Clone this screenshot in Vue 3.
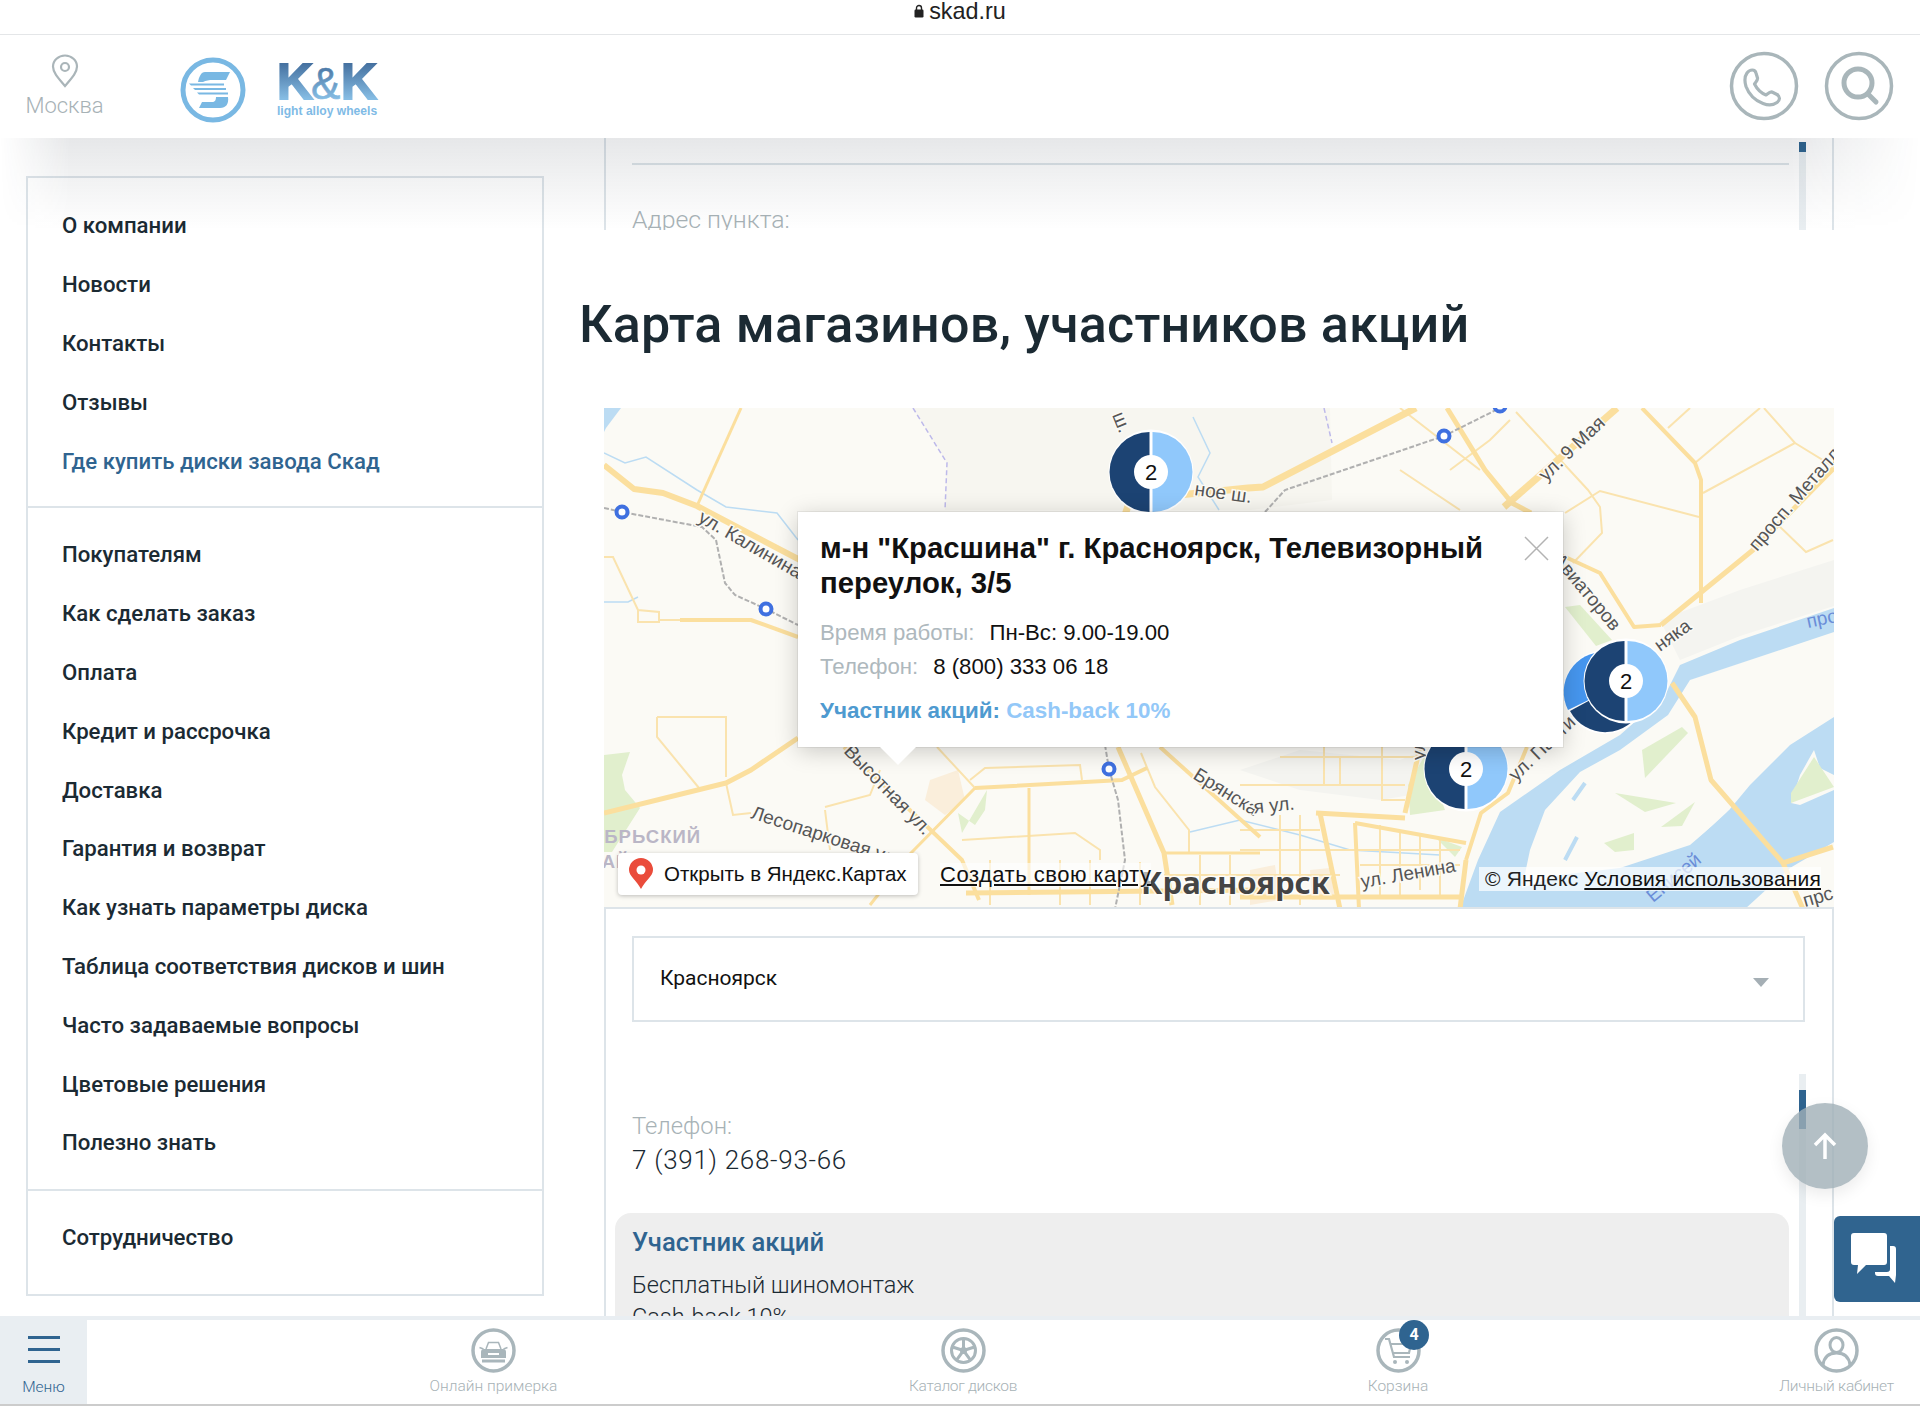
<template>
  <div class="page">
    <div class="status">
      <svg class="lock" width="10" height="14" viewBox="0 0 10 14"><path d="M2.5 6V4a2.5 2.5 0 0 1 5 0v2" fill="none" stroke="#222" stroke-width="1.4"/><rect x="0.5" y="5.5" width="9" height="8" rx="1.2" fill="#222"/></svg>
      <span>skad.ru</span>
    </div>

    <header class="head">
      <div class="city">
        <svg width="28" height="34" viewBox="0 0 28 34"><path d="M14 32C8 25 2 19 2 12.5a12 11 0 0 1 24 0C26 19 20 25 14 32Z" fill="none" stroke="#aab5b9" stroke-width="2.2"/><circle cx="14" cy="13" r="4" fill="none" stroke="#aab5b9" stroke-width="2.2"/></svg>
        <span>Москва</span>
      </div>
      <svg class="s-logo" width="66" height="66" viewBox="180 57 66 66">
        <circle cx="213" cy="90" r="30" fill="none" stroke="#79b8e3" stroke-width="5"/>
        <path d="M205 72h25l-4 8h-13c-4 0-7 .5-10 2h-5c1-5 3-10 7-10Z" fill="#79b8e3"/>
        <path d="M189 83.500h35v2h-33ZM193 88h33v2h-31ZM197 92.500h31v2h-29Z" fill="#79b8e3"/>
        <path d="M216 97h12c1 7-2 11-8 11h-21l3-6h10c3 0 4-2 4-5Z" fill="#79b8e3"/>
      </svg>
      <div class="kk">
        <svg class="kk-mark" width="104" height="40" viewBox="276 62 104 40">
          <defs>
            <linearGradient id="kkGrad" x1="0" y1="63" x2="0" y2="99" gradientUnits="userSpaceOnUse">
              <stop offset="0" stop-color="#45709f"/>
              <stop offset="1" stop-color="#86bde4"/>
            </linearGradient>
          </defs>
          <text x="276" y="99" class="kk-big">K</text>
          <text x="310" y="99" class="kk-amp">&amp;</text>
          <text x="340" y="99" class="kk-big">K</text>
        </svg>
        <div class="kk-sub">light alloy wheels</div>
      </div>
      <div class="head-btns">
        <button class="round-btn">
          <svg width="70" height="70" viewBox="0 0 70 70"><circle cx="35" cy="35" r="32.500" fill="none" stroke="#a9b6ba" stroke-width="3.500"/><path d="M18 22c3-4 8-4 9 0l1.500 5c.5 2-1.500 4-3 6 2.500 5 6.500 9 11.500 11 2-1.500 4-3.500 6-3l5 2.500c3.500 2 3 6 0 8-4 3-9 3-14 1-8-3-14-9-17-17-1.500-5-1.500-10 1-13.500Z" fill="none" stroke="#a9b6ba" stroke-width="3.200" stroke-linejoin="round"/></svg>
        </button>
        <button class="round-btn">
          <svg width="70" height="70" viewBox="0 0 70 70"><circle cx="35" cy="35" r="32.500" fill="none" stroke="#a9b6ba" stroke-width="3.500"/><circle cx="34" cy="32" r="14" fill="none" stroke="#a9b6ba" stroke-width="5"/><path d="M44 43l8 8" stroke="#a9b6ba" stroke-width="5" stroke-linecap="round"/></svg>
        </button>
      </div>
    </header>

    <div class="body">
      <aside class="side">
        <div v-for="(group, i) in menu" :key="i" class="side-group">
          <a v-for="item in group" :key="item" class="side-item" :class="{ on: item === activeItem }">{{ item }}</a>
        </div>
      </aside>

      <main class="main">
        <section class="card-top">
          <div class="card-line"></div>
          <div class="addr">Адрес пункта:</div>
          <div class="scroll scroll-a"><i></i></div>
        </section>

        <h1 class="title">Карта магазинов, участников акций</h1>

        <div class="map">
          <svg class="map-svg" width="1230" height="499" viewBox="604 408 1230 499">
            <rect x="604" y="408" width="1230" height="499" fill="#fbfaf5"/>
            <path d="M913 408L1330 408 1332 500 1250 510 945 510 947 463Z" fill="#f7f6f0"/>
            <path d="M604 408h17l-15 20-2 4Z" fill="#bcdcf3"/>
            <!-- hill shading -->
            <g fill="#f4f4f0">
              <path d="M1660 620L1740 590 1834 560V606L1740 636 1680 660Z"/>
              <path d="M1240 770L1300 750 1400 760 1450 740 1440 790 1380 800 1300 790Z"/>
            </g>
            <!-- water -->
            <path d="M1834 608L1740 640 1680 665 1665 695 1620 735 1560 770 1500 812 1478 860 1460 909H1834Z" fill="#bcdcf3"/>
            <path d="M1834 632L1750 660 1690 680 1668 715 1620 750 1580 772 1545 810 1530 850 1522 888 1560 875 1620 868 1690 845 1725 815 1750 785 1790 745 1834 717Z" fill="#fbfaf5"/>
            <path d="M1745 909L1790 868 1834 842V909Z" fill="#fbfaf5"/>
            <path d="M1791 803L1800 775 1814 750 1820 768 1834 775V790L1800 805Z" fill="#fbfaf5"/>
            <path d="M1573 800L1585 783M1565 860L1577 837M1700 840L1730 812" stroke="#bcdcf3" stroke-width="4" fill="none"/>
            <!-- greens -->
            <g fill="#e1efcd">
              <path d="M1565 607L1580 605 1612 640 1596 646Z"/>
              <path d="M1642 750L1682 727 1688 733 1645 778Z"/>
              <path d="M1615 793L1676 803 1645 812Z"/>
              <path d="M1661 827L1695 802 1682 826Z"/>
              <path d="M1604 843L1634 833 1634 850 1615 852Z"/>
              <path d="M1791 793L1814 757 1834 787 1791 803Z"/>
              <path d="M604 755L630 752 622 775 625 790 640 808 612 852H604Z"/>
              <path d="M962 833L987 790 985 810 975 825 958 813Z"/>
              <path d="M1408 785L1425 755 1445 810 1410 815Z"/>
              <path d="M1435 837L1462 847 1455 857Z"/>
            </g>
            <path d="M930 780L958 770 965 800 945 815 925 800Z" fill="#faeedb"/>
            <path d="M1250 870L1275 865 1280 900 1250 905ZM1310 870L1330 868 1335 900H1312Z" fill="#faeedb"/>
            <!-- thin rivers and district line -->
            <g fill="none" stroke="#bcdcf3" stroke-width="1.500">
              <path d="M604 453L625 463 646 457 697 490 726 507 777 513 798 540"/>
              <path d="M604 602L628 602 638 597"/>
              <path d="M1193 417L1210 453 1198 477 1219 510"/>
              <path d="M1190 832L1240 820 1300 835 1350 850 1440 855"/>
            </g>
            <path d="M913 408L947 463 945 510M1324 408L1332 443" fill="none" stroke="#bdb9ea" stroke-width="1.500" stroke-dasharray="5 3"/>
            <!-- small roads -->
            <g fill="none" stroke="#fae3ae" stroke-width="2">
              <path d="M604 557H613L638 610 659 612V622H638V610M659 620H680"/>
              <path d="M657 717H726V777M657 717V737L699 788"/>
              <path d="M726 783L733 815 751 813"/>
              <path d="M825 807L870 795 880 770M830 850L825 810"/>
              <path d="M975 788L937 747M970 780L985 768 1080 765 1082 780"/>
              <path d="M962 840L1075 833 1100 850V860"/>
              <path d="M1141 753L1155 787 1189 830V853"/>
              <path d="M1240 785H1405M1280 757H1440M1324 747V785M1340 757V785M1382 747V800H1405"/>
              <path d="M1516 412L1588 490 1600 507 1602 533 1573 563M1565 513L1600 491 1699 517"/>
              <path d="M1695 463L1760 408M1668 428L1690 408"/>
              <path d="M1703 493L1795 443 1764 408M1795 443L1834 467"/>
              <path d="M1776 523L1806 552 1833 540"/>
              <path d="M1400 408L1480 470M1450 470L1490 440 1510 420M1460 510L1400 470"/>
              <path d="M1240 850H1460M1240 875H1340M1280 815V900M1240 830H1320M1300 815V905M1380 825V895M1400 830V895M1420 835V890M1440 838V895M1360 865H1460"/>
              <path d="M990 860V905M1060 860V905M1090 860V905M1140 862V905M1200 855V905M1230 855V905M1164 875H1260"/>
            </g>
            <!-- main roads -->
            <g fill="none" stroke="#fbdf9e" stroke-linejoin="round">
              <path stroke-width="6" d="M604 465L634 489 663 493 697 506 800 560"/>
              <path stroke-width="3" d="M741 408L697 506"/>
              <path stroke-width="4" d="M680 620H751L798 637"/>
              <path stroke-width="5" d="M604 813L726 783 751 770 798 738"/>
              <path stroke-width="4" d="M844 747L962 860 979 900"/>
              <path stroke-width="4" d="M975 788L1122 780 1147 768"/>
              <path stroke-width="3" d="M975 788L911 853 870 905"/>
              <path stroke-width="3" d="M1029 788V895"/>
              <path stroke-width="5" d="M1118 747L1164 853 1172 905"/>
              <path stroke-width="4" d="M1160 747L1260 837"/>
              <path stroke-width="5" d="M966 893L1260 890"/>
              <path stroke-width="3" d="M1164 853H1260"/>
              <path stroke-width="7" d="M1120 530L1130 500 1248 488 1263 487 1416 408"/>
              <path stroke-width="5" d="M1447 408L1485 470 1512 503 1531 513"/>
              <path stroke-width="7" d="M1504 507L1617 408"/>
              <path stroke-width="4" d="M1642 408L1695 463 1701 480V603"/>
              <path stroke-width="5" d="M1661 625L1753 550 1834 468"/>
              <path stroke-width="4" d="M1561 555L1600 573 1634 627 1661 625"/>
              <path stroke-width="5" d="M1672 683L1695 717 1711 780 1783 863 1833 847M1783 863L1803 909"/>
              <path stroke-width="5" d="M1405 813L1420 747"/>
              <path stroke-width="5" d="M1316 813L1405 818"/>
              <path stroke-width="4" d="M1466 860L1481 813 1508 793 1527 747"/>
              <path stroke-width="5" d="M1320 813L1340 909"/>
              <path stroke-width="4" d="M1355 823L1359 909M1355 823L1466 843"/>
              <path stroke-width="5" d="M1240 897H1462M1466 860L1460 909"/>
            </g>
            <!-- railways and stops -->
            <g fill="none" stroke="#b0b0b0" stroke-width="2" stroke-dasharray="5 2">
              <path d="M604 508L622 512 702 527 716 540 725 583 735 595 766 609 798 625"/>
              <path d="M1265 512L1285 490 1444 436 1500 408"/>
              <path d="M1109 769L1118 800 1125 860 1115 909M1105 745L1109 769"/>
            </g>
            <g fill="#fff" stroke="#3f70e0" stroke-width="4">
              <circle cx="622" cy="512" r="5.500"/>
              <circle cx="766" cy="609" r="5.500"/>
              <circle cx="1109" cy="769" r="5.500"/>
              <circle cx="1444" cy="436" r="5.500"/>
              <circle cx="1500" cy="406" r="5.500"/>
            </g>
            <!-- street labels -->
            <g class="lbl">
              <text transform="translate(1112 415) rotate(68)">ш.</text>
              <text transform="translate(1194 495) rotate(8)">ное ш.</text>
              <text transform="translate(697 521) rotate(30)">ул. Калинина</text>
              <text transform="translate(1546 482) rotate(-44)">ул. 9 Мая</text>
              <text transform="translate(1757 552) rotate(-49)">просп. Металлургов</text>
              <text transform="translate(1552 560) rotate(50)">Авиаторов</text>
              <text transform="translate(1660 652) rotate(-36)">няка</text>
              <text transform="translate(1516 782) rotate(-44)">ул. Партизана</text>
              <text transform="translate(1425 760) rotate(-90)">ул.</text>
              <text transform="translate(843 752) rotate(46)">Высотная ул.</text>
              <text transform="translate(750 818) rotate(18)">Лесопарковая ул.</text>
              <text transform="translate(1362 888) rotate(-10)">ул. Ленина</text>
              <path id="bryansk" d="M1192 778L1250 814 1310 808" fill="none"/>
              <text><textPath href="#bryansk">Брянская ул.</textPath></text>
            </g>
            <text class="district" x="590" y="843">ЯБРЬСКИЙ</text>
            <text class="district" x="590" y="868">РАЙОН</text>
            <text class="water-lbl" transform="translate(1808 628) rotate(-12)">проток</text>
            <text class="water-lbl" transform="translate(1653 903) rotate(-40)">Енисей</text>
            <text class="water-lbl dark" transform="translate(1805 907) rotate(-16)">прс</text>
            <text class="city-lbl" x="1141" y="894">Красноярск</text>
            <!-- clusters -->
            <g>
              <circle cx="1605" cy="692" r="42" fill="#fff"/>
              <path d="M1605 692L1568 710A40 40 0 0 1 1605 652Z" fill="#4696ee"/>
              <path d="M1605 692L1605 652A40 40 0 0 1 1645 692Z" fill="#4696ee"/>
              <path d="M1605 692L1570 711A40 40 0 0 0 1642 708Z" fill="#1c4373"/>
            </g>
            <g v-for="c in clusters" :key="c.x">
              <circle :cx="c.x" :cy="c.y" r="42.500" fill="#fff"/>
              <path :d="`M${c.x - 1.5} ${c.y - 40}A40 40 0 0 0 ${c.x - 1.5} ${c.y + 40}Z`" fill="#1c4373"/>
              <path :d="`M${c.x + 1.5} ${c.y - 40}A40 40 0 0 1 ${c.x + 1.5} ${c.y + 40}Z`" fill="#90c8fb"/>
              <circle :cx="c.x" :cy="c.y" r="17" fill="#fff"/>
              <text class="num" :x="c.x" :y="c.y + 8">2</text>
            </g>
          </svg>

          <div class="balloon">
            <svg class="close" width="25" height="25" viewBox="0 0 25 25"><path d="M1 1l23 23M24 1L1 24" stroke="#b3b3b3" stroke-width="1.500"/></svg>
            <div class="b-title">м-н "Красшина" г. Красноярск, Телевизорный переулок, 3/5</div>
            <div class="b-row"><span class="b-key">Время работы:</span><span>Пн-Вс: 9.00-19.00</span></div>
            <div class="b-row"><span class="b-key">Телефон:</span><span>8 (800) 333 06 18</span></div>
            <div class="b-promo">Участник акций: <em>Cash-back 10%</em></div>
            <i class="b-tail"></i>
          </div>

          <div class="open-btn">
            <svg width="26" height="32" viewBox="0 0 26 32"><path d="M13 31C9 23 1 18 1 12a12 12 0 0 1 24 0c0 6-8 11-12 19Z" fill="#ea4c3b"/><circle cx="13" cy="12" r="4.500" fill="#fff"/></svg>
            <span>Открыть в Яндекс.Картах</span>
          </div>
          <a class="make-map">Создать свою карту</a>
          <div class="copy">© Яндекс <a>Условия использования</a></div>
        </div>

        <section class="card-low">
          <div class="select">
            <span>Красноярск</span>
            <i class="caret"></i>
          </div>
          <div class="lbl-key">Телефон:</div>
          <div class="lbl-val">7 (391) 268-93-66</div>
          <div class="promo">
            <div class="promo-h">Участник акций</div>
            <div class="promo-t">Бесплатный шиномонтаж</div>
            <div class="promo-t">Cash-back 10%</div>
          </div>
          <div class="scroll scroll-b"><i></i></div>
        </section>
      </main>

      <button class="to-top">
        <svg width="26" height="28" viewBox="0 0 26 28"><path d="M13 27V3M3 13L13 3l10 10" fill="none" stroke="#fff" stroke-width="3.500"/></svg>
      </button>
      <button class="chat">
        <svg width="52" height="52" viewBox="0 0 52 52">
          <path d="M39 13h3a3 3 0 0 1 3 3v26l-1 8-6-7H27a3 3 0 0 1-3-3v-1h12a3 3 0 0 0 3-3Z" fill="#fff"/>
          <path d="M3 0h30a3 3 0 0 1 3 3v26a3 3 0 0 1-3 3H15l-9 9 1-9H3a3 3 0 0 1-3-3V3a3 3 0 0 1 3-3Z" fill="#fff"/>
        </svg>
      </button>
    </div>

    <nav class="nav">
      <a class="menu-tile">
        <span class="burger"><i></i><i></i><i></i></span>
        <span>Меню</span>
      </a>
      <div class="nav-items">
        <a class="nav-item w-fit">
          <svg width="45" height="45" viewBox="0 0 45 45"><circle cx="22.500" cy="22.500" r="20.500" fill="none" stroke="#a9b6bb" stroke-width="3.500"/><path d="M15 21l2.500-6.500h10L30 21" fill="none" stroke="#a9b6bb" stroke-width="1.500"/><path d="M13 21h19c2 0 3 1 3 3v6H10v-6c0-2 1-3 3-3Z" fill="#a9b6bb"/><path d="M8.500 19.500l4 1.500M36.500 19.500l-4 1.500" stroke="#a9b6bb" stroke-width="1.500"/><rect x="11" y="31.500" width="23" height="3" fill="#a9b6bb"/><rect x="17" y="25" width="11" height="2" fill="#fff"/></svg>
          <span>Онлайн примерка</span>
        </a>
        <a class="nav-item w-cat">
          <svg width="45" height="45" viewBox="0 0 45 45"><circle cx="22.500" cy="22.500" r="20.500" fill="none" stroke="#a9b6bb" stroke-width="3.500"/><circle cx="22.500" cy="22.500" r="12" fill="none" stroke="#a9b6bb" stroke-width="3"/><path d="M22.500 22.500V11M22.500 22.500L33.500 19M22.500 22.500l6.800 9.300M22.500 22.500l-6.800 9.300M22.500 22.500L11.500 19" stroke="#a9b6bb" stroke-width="3"/><circle cx="22.500" cy="22.500" r="3.500" fill="#a9b6bb"/></svg>
          <span>Каталог дисков</span>
        </a>
        <a class="nav-item w-cart">
          <svg width="45" height="45" viewBox="0 0 45 45"><circle cx="22.500" cy="22.500" r="20.500" fill="none" stroke="#a9b6bb" stroke-width="3.500"/><path d="M9 11h4l5 18h16M15 16h20l-2 9H17" fill="none" stroke="#a9b6bb" stroke-width="2.200"/><circle cx="19" cy="34" r="2" fill="#a9b6bb"/><circle cx="31" cy="34" r="2" fill="#a9b6bb"/></svg>
          <span>Корзина</span>
          <b class="badge">4</b>
        </a>
        <a class="nav-item w-lk">
          <svg width="45" height="45" viewBox="0 0 45 45"><circle cx="22.500" cy="22.500" r="20.500" fill="none" stroke="#a9b6bb" stroke-width="3.500"/><ellipse cx="22.500" cy="17" rx="6.500" ry="7.500" fill="none" stroke="#a9b6bb" stroke-width="3"/><path d="M9 37c1-8 6-12 13.500-12S35 29 36 37" fill="none" stroke="#a9b6bb" stroke-width="3"/></svg>
          <span>Личный кабинет</span>
        </a>
      </div>
    </nav>
  </div>
</template>

<script setup>
const activeItem = 'Где купить диски завода Скад'

const menu = [
  ['О компании', 'Новости', 'Контакты', 'Отзывы', activeItem],
  [
    'Покупателям',
    'Как сделать заказ',
    'Оплата',
    'Кредит и рассрочка',
    'Доставка',
    'Гарантия и возврат',
    'Как узнать параметры диска',
    'Таблица соответствия дисков и шин',
    'Часто задаваемые вопросы',
    'Цветовые решения',
    'Полезно знать',
  ],
  ['Сотрудничество'],
]

const clusters = [
  { x: 1151, y: 472 },
  { x: 1626, y: 681 },
  { x: 1466, y: 769 },
]
</script>

<style>
html, body { margin: 0; background: #fff; }
</style>

<style scoped>
.page { position: relative; width: 1920px; height: 1406px; overflow: hidden; display: flex; flex-direction: column; background: #fff; font-family: Roboto, "Noto Sans", sans-serif; color: #1b2a33; }

.status { height: 34px; border-bottom: 1px solid #e4e6e8; display: flex; justify-content: center; align-items: flex-start; gap: 5px; font: 23.400px/22px "Liberation Sans", sans-serif; color: #222; }
.lock { margin-top: 4px; }

.head { height: 103px; display: flex; align-items: flex-start; position: relative; z-index: 3; background: #fff; }
.city { width: 75px; margin: 19px 0 0 27px; display: flex; flex-direction: column; align-items: center; gap: 6px; font-size: 22px; font-weight: 300; color: #a7b2b6; line-height: 24px; }
.s-logo { margin: 22px 0 0 78px; }
.kk { margin: 27px 0 0 31px; width: 104px; }
.kk-mark { display: block; }
.kk-big { font: 700 50px "Liberation Sans", sans-serif; fill: url(#kkGrad); stroke: url(#kkGrad); stroke-width: 1.800px; }
.kk-amp { font: 400 44px "Liberation Sans", sans-serif; fill: url(#kkGrad); stroke: url(#kkGrad); stroke-width: .6px; }
.kk-sub { font: 700 12.100px/14px "Liberation Sans", sans-serif; color: #7fbbe6; margin-top: 2px; white-space: nowrap; }
.head-btns { margin: 16px 26px 0 auto; display: flex; gap: 25px; }
.round-btn { width: 70px; height: 70px; padding: 0; border: 0; background: none; display: block; }

.body { position: relative; flex: 1; min-height: 0; display: flex; align-items: flex-start; }
.body::before { content: ""; position: absolute; z-index: 2; top: 0; left: 0; right: 0; height: 92px; pointer-events: none; background: linear-gradient(rgba(30, 40, 55, .11), rgba(30, 40, 55, 0)); -webkit-mask-image: linear-gradient(90deg, transparent, #000 70px, #000 calc(100% - 130px), transparent); mask-image: linear-gradient(90deg, transparent, #000 70px, #000 calc(100% - 130px), transparent); }

.side { width: 518px; margin: 38px 0 0 26px; box-sizing: border-box; border: 2px solid #dde4e9; padding-bottom: 10px; flex: none; }
.side-group { padding: 17px 0; border-bottom: 2px solid #dde4e9; }
.side-group:first-child { padding: 18px 0 16px; }
.side-group:last-child { border-bottom: 0; }
.side-item { display: flex; align-items: center; height: 58.800px; padding-left: 34px; font-size: 22.200px; font-weight: 500; color: #1b2a33; }
.side-item.on { color: #2f6490; }

.main { margin-left: 35px; flex: 1; min-width: 0; }
.card-top { position: relative; height: 92px; width: 1230px; margin-left: 25px; box-sizing: border-box; border: solid #dde4e9; border-width: 0 2px; padding: 25px 0 0 26px; overflow: hidden; }
.card-line { height: 2px; width: 1157px; background: #dde4e9; }
.addr { margin-top: 40px; font-size: 24.800px; font-weight: 300; line-height: 30px; color: #a7b2b6; }
.scroll { position: absolute; left: 1193px; width: 7px; background: #e9eef1; }
.scroll i { display: block; width: 100%; background: #2f6490; }
.scroll-a { top: 4px; bottom: 0; }
.scroll-a i { height: 10px; }
.scroll-b { top: 165px; bottom: 0; }
.scroll-b i { height: 39px; margin-top: 16px; }

.title { margin: 65px 0 53px; font-size: 52px; line-height: 60px; font-weight: 500; letter-spacing: .2px; color: #1b2a33; white-space: nowrap; }

.map { position: relative; width: 1230px; height: 499px; margin-left: 25px; overflow: hidden; }
.map-svg { position: absolute; inset: 0; display: block; }
.lbl text { font: 19px "Liberation Sans", sans-serif; fill: #555; paint-order: stroke; stroke: #fbfaf5; stroke-width: 3px; }
.district { font: 700 18.500px "Liberation Sans", sans-serif; fill: #bab6c6; letter-spacing: 1px; }
.water-lbl { font: 19px "Liberation Sans", sans-serif; fill: #6a8dd8; }
.water-lbl.dark { fill: #555; }
.city-lbl { font: 700 31px "Noto Sans", sans-serif; fill: #444; paint-order: stroke; stroke: rgba(255,255,255,.7); stroke-width: 3px; }
.num { font: 22px "Liberation Sans", sans-serif; text-anchor: middle; fill: #111; }

.balloon { position: absolute; left: 194px; top: 104px; width: 765px; height: 235px; box-sizing: border-box; padding: 18px 60px 0 22px; background: #fff; box-shadow: 0 0 0 1px rgba(0,0,0,.06), 0 4px 22px rgba(0,0,0,.2); font-family: "Liberation Sans", sans-serif; color: #111; }
.b-title { font-size: 29.300px; line-height: 35px; font-weight: 700; margin-bottom: 16px; }
.b-row { font-size: 22.200px; line-height: 34px; display: flex; gap: 15px; }
.b-key { color: #aeb8bd; }
.b-promo { margin-top: 10px; font-size: 22.400px; line-height: 34px; font-weight: 700; color: #4e9ad0; }
.b-promo em { font-style: normal; color: #93c8f8; }
.close { position: absolute; right: 14px; top: 24px; }
.b-tail { position: absolute; left: 82px; bottom: -18px; width: 0; height: 0; border: solid transparent; border-width: 18px 18px 0; border-top-color: #fff; }

.open-btn { position: absolute; left: 14px; top: 445px; width: 300px; height: 42px; box-sizing: border-box; padding-left: 10px; display: flex; align-items: center; gap: 10px; background: #fff; border-radius: 4px; box-shadow: 0 1px 4px rgba(0,0,0,.25); font: 20.500px "Liberation Sans", sans-serif; color: #111; white-space: nowrap; }
.make-map { position: absolute; left: 336px; top: 455px; font: 22px/24px "Liberation Sans", sans-serif; color: #111; text-decoration: underline; background: rgba(255,255,255,.6); letter-spacing: .5px; }
.copy { position: absolute; right: 13px; top: 459px; padding-left: 6px; font: 21px/24px "Liberation Sans", sans-serif; color: #222; background: rgba(255,255,255,.7); letter-spacing: .17px; }
.copy a { text-decoration: underline; color: #111; }

.card-low { position: relative; width: 1230px; height: 409px; margin-left: 25px; box-sizing: border-box; border: solid #dde4e9; border-width: 2px 2px 0; padding: 27px 27px 0 26px; overflow: hidden; }
.select { height: 86px; box-sizing: border-box; border: 2px solid #dde4e9; padding: 0 26px 3px; display: flex; align-items: center; justify-content: space-between; font-size: 21px; color: #111; }
.caret { width: 0; height: 0; margin: 10px 8px 0 0; border: solid transparent; border-width: 9px 8.500px 0; border-top-color: #a5afb5; }
.lbl-key { margin-top: 89px; font-size: 23.800px; font-weight: 300; line-height: 30px; color: #a7b2b6; }
.lbl-val { margin-top: 1px; font-size: 26px; font-weight: 300; line-height: 36px; color: #1b2a33; letter-spacing: .7px; }
.promo { margin: 35px -10px 0 -17px; height: 140px; padding: 14px 0 0 17px; background: #eee; border-radius: 16px 16px 0 0; width: 1174px; box-sizing: border-box; }
.promo-h { font-size: 25.600px; line-height: 30px; font-weight: 500; color: #2f6490; margin-bottom: 12px; }
.promo-t { font-size: 23.500px; font-weight: 300; line-height: 32px; color: #1b2a33; }

.to-top { position: absolute; z-index: 4; left: 1782px; top: 965px; width: 86px; height: 86px; padding: 0; border: 0; border-radius: 50%; background: rgba(160, 175, 182, .8); box-shadow: 0 6px 16px rgba(0,0,0,.08); display: flex; align-items: center; justify-content: center; }
.chat { position: absolute; z-index: 4; right: 0; top: 1078px; width: 86px; height: 86px; padding: 0; border: 0; border-radius: 6px 0 0 6px; background: #30648f; display: flex; align-items: center; justify-content: center; }

.nav { position: relative; z-index: 5; height: 90px; box-sizing: border-box; display: flex; background: #fff; border-top: 4px solid #e9eef2; border-bottom: 2px solid #ccc; font-size: 15.500px; font-weight: 300; color: #a7b2b6; }
.menu-tile { width: 87px; flex: none; background: #e9eef2; display: flex; flex-direction: column; align-items: center; color: #2f6490; font-size: 15.500px; line-height: 20px; }
.burger { display: flex; flex-direction: column; gap: 9px; width: 32px; margin: 16px 0 14px; }
.burger i { height: 3px; background: #2f6490; }
.nav-items { flex: 1; display: flex; justify-content: space-between; padding: 8px 27px 0 342px; }
.nav-item { position: relative; display: flex; flex-direction: column; align-items: center; white-space: nowrap; line-height: 20px; gap: 3px; }
.w-fit { width: 129px; }
.w-cat { width: 106px; letter-spacing: -.3px; }
.w-cart { width: 60px; }
.w-lk { width: 113px; letter-spacing: -.25px; }
.badge { position: absolute; left: 31px; top: -8px; width: 30px; height: 30px; border-radius: 50%; background: #2f6490; color: #fff; font: 700 16px/30px Roboto, sans-serif; text-align: center; }
</style>
